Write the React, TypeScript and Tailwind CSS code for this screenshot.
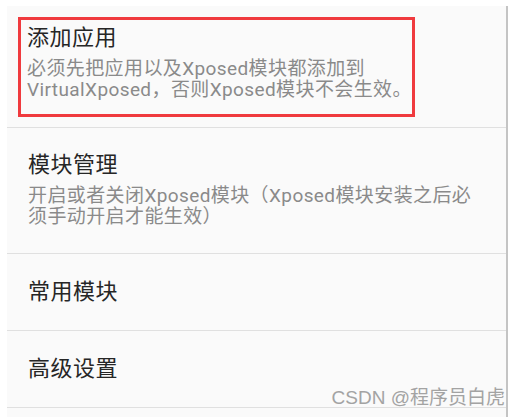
const font = { fontFamily: 'Roboto, "Noto Sans CJK SC", sans-serif' };

function Title({ children }: { children: React.ReactNode }) {
  return <div className="text-[22px] leading-[28px] tracking-[0.5px] text-[#262626]">{children}</div>;
}

function Sub({ children }: { children: React.ReactNode }) {
  return <div className="mt-[6px] text-[19px] leading-[21px] tracking-[0.4px] text-[#8a8a8a]">{children}</div>;
}

export default function App() {
  return (
    <div className="min-h-screen bg-white pl-[7px] pr-[8px] pt-[6px]" style={font}>
      <div className="relative h-[411px] border-r-2 border-[#c4c4c4] bg-[#fafafa]">
        {/* 添加应用（红框标注） */}
        <div className="border-b border-[#e0e0e0] px-[11px] pb-[10px] pt-[11px]">
          <div className="w-[397px] border-[3px] border-[#f03a3e] pb-[14px] pl-[6px] pt-[4px]">
            <Title>添加应用</Title>
            <Sub>
              必须先把应用以及Xposed模块都添加到
              <br />
              VirtualXposed，否则Xposed模块不会生效。
            </Sub>
          </div>
        </div>

        <div className="border-b border-[#e0e0e0] pb-[26px] pl-[21px] pt-[23px]">
          <Title>模块管理</Title>
          <Sub>
            开启或者关闭Xposed模块（Xposed模块安装之后必
            <br />
            须手动开启才能生效）
          </Sub>
        </div>

        <div className="flex h-[77px] items-center border-b border-[#e0e0e0] pl-[21px]">
          <Title>常用模块</Title>
        </div>

        <div className="flex h-[77px] items-center border-b border-[#e0e0e0] pl-[21px]">
          <Title>高级设置</Title>
        </div>

        <div className="absolute bottom-[8px] right-[1px] text-[19px] leading-[22px] text-[#a3a3a3]" style={{ fontFamily: '"Liberation Sans", "Noto Sans CJK SC", sans-serif' }}>
          CSDN @程序员白虎
        </div>
      </div>
    </div>
  );
}
